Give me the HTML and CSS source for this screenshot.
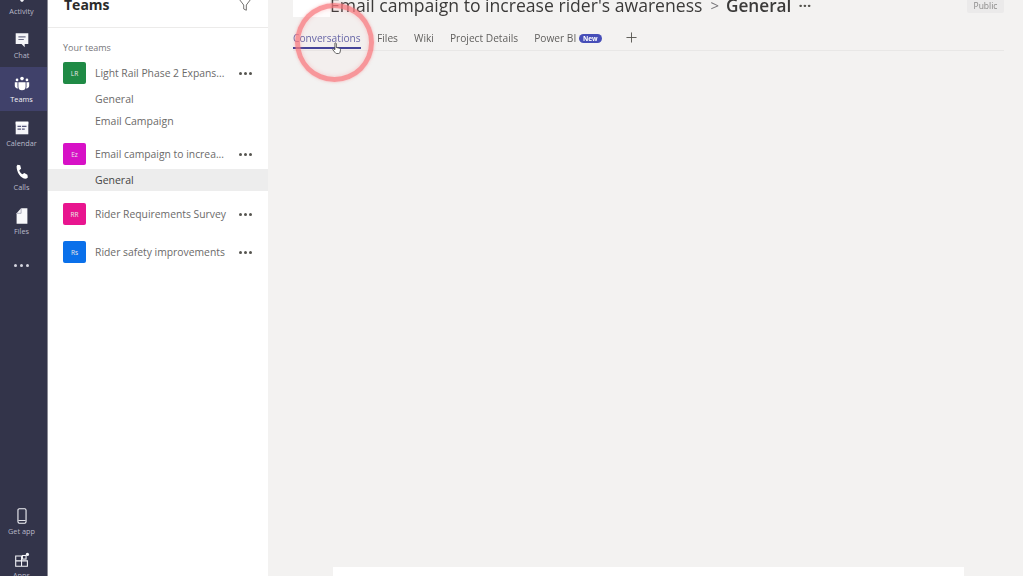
FILE: index.html
```html
<!DOCTYPE html>
<html lang="en">
<head>
<meta charset="UTF-8">
<title>Teams - General</title>
<link rel="stylesheet" href="styles.css">
</head>
<body>

<div class="app">

  <!-- left rail -->
  <nav class="rail">
    <div class="rail-top">
      <a class="rail-item">
        <svg viewBox="0 0 20 20" class="rail-icon"><path d="M10 1c-3 0-5 2-5 5v4l-2 3h14l-2-3V6c0-3-2-5-5-5zM8 14.500h4c0 1-1 2-2 2s-2-1-2-2z" fill="#f4f4f8"/></svg>
        <span>Activity</span>
      </a>
      <a class="rail-item">
        <svg viewBox="0 0 20 20" class="rail-icon"><path d="M3 2.500h14v12h-4v3.500l-3.500-3.500H3z" fill="#f4f4f8"/><path d="M6 6.500h8M6 9.500h6" stroke="#6b6c85" stroke-width="1.200"/></svg>
        <span>Chat</span>
      </a>
      <a class="rail-item active">
        <svg viewBox="0 0 20 20" class="rail-icon"><circle cx="10" cy="4" r="2" fill="#fff"/><circle cx="4.500" cy="5.500" r="1.500" fill="#fff"/><circle cx="15.500" cy="5.500" r="1.500" fill="#fff"/><path d="M6 8h8v5a4 4 0 0 1-8 0zM2 8h3v5l.5 2C3 15 2 13.500 2 12zM15 8h3v4c0 1.500-1 3-3.500 3l.5-2z" fill="#fff"/></svg>
        <span>Teams</span>
      </a>
      <a class="rail-item">
        <svg viewBox="0 0 20 20" class="rail-icon"><path d="M3 3h14v14H3z" fill="#f4f4f8"/><path d="M3 3h14v3H3z" fill="#fff"/><path d="M5 7.500h4v1.500H5zM10 7.500h5v1.500h-5zM5 10.500h4V12H5zM10 10.500h3V12h-3z" fill="#55567a"/></svg>
        <span>Calendar</span>
      </a>
      <a class="rail-item">
        <svg viewBox="0 0 20 20" class="rail-icon"><path d="M5 2l3 .5 1 4-2 1.500c.5 2 1.500 3.500 3.500 4.500l2-1.500 3.500 2 .5 3-2 1.500C8 17 4 10 4 3.500z" fill="#fff"/></svg>
        <span>Calls</span>
      </a>
      <a class="rail-item">
        <svg viewBox="0 0 20 20" class="rail-icon"><path d="M9 1.500h7v17H4V7z" fill="#f8f8fb"/><path d="M9 1.500V7H4" fill="none" stroke="#6b6c85" stroke-width=".6"/></svg>
        <span>Files</span>
      </a>
      <div class="rail-more"><i></i><i></i><i></i></div>
    </div>
    <div class="rail-bottom">
      <a class="rail-item">
        <svg viewBox="0 0 20 20" class="rail-icon"><rect x="5.500" y="2" width="9" height="16" rx="1.500" fill="none" stroke="#f4f4f8" stroke-width="1.200"/><path d="M6 15h8" stroke="#f4f4f8"/></svg>
        <span>Get app</span>
      </a>
      <a class="rail-item">
        <svg viewBox="0 0 20 20" class="rail-icon"><path d="M3 5.500h6.500V17H3zM9.500 11H16v6H9.500zM3 11h13" fill="none" stroke="#f4f4f8" stroke-width="1.200"/><rect x="10.500" y="5" width="4" height="4" fill="none" stroke="#f4f4f8" stroke-width="1.200"/><circle cx="16" cy="3.800" r="1.800" fill="#f4f4f8"/></svg>
        <span>Apps</span>
      </a>
    </div>
  </nav>

  <!-- teams list -->
  <aside class="panel">
    <header class="panel-head">
      <h1>Teams</h1>
      <svg viewBox="0 0 16 16" class="filter"><path d="M1.500 1.500h13L9.500 8v6l-3-1.500V8z" fill="none" stroke="#6e6d6b" stroke-width="1.100"/></svg>
    </header>
    <div class="panel-label">Your teams</div>

    <div class="team team-first">
      <span class="avatar green">LR</span>
      <span class="team-name">Light Rail Phase 2 Expans...</span>
      <span class="dots"><i></i><i></i><i></i></span>
    </div>
    <div class="channel channel-first">General</div>
    <div class="channel">Email Campaign</div>

    <div class="team team-second">
      <span class="avatar magenta">Ez</span>
      <span class="team-name">Email campaign to increa...</span>
      <span class="dots"><i></i><i></i><i></i></span>
    </div>
    <div class="channel current">General</div>

    <div class="team team-third">
      <span class="avatar pink">RR</span>
      <span class="team-name">Rider Requirements Survey</span>
      <span class="dots"><i></i><i></i><i></i></span>
    </div>
    <div class="team team-fourth">
      <span class="avatar blue">Rs</span>
      <span class="team-name">Rider safety improvements</span>
      <span class="dots"><i></i><i></i><i></i></span>
    </div>
  </aside>

  <!-- channel view -->
  <main class="main">
    <div class="title-row">
      <div class="team-tile"></div>
      <h2>Email campaign to increase rider's awareness</h2>
      <span class="chevron">&gt;</span>
      <strong>General</strong>
      <span class="title-dots">&middot;&middot;&middot;</span>
      <span class="public">Public</span>
    </div>
    <div class="tabs">
      <a class="tab on">Conversations</a>
      <a class="tab">Files</a>
      <a class="tab">Wiki</a>
      <a class="tab">Project Details</a>
      <a class="tab">Power BI <em class="new">New</em></a>
      <svg viewBox="0 0 12 12" class="plus"><path d="M6 .5v11M.5 6h11" stroke="#55544f" stroke-width="1"/></svg>
    </div>
    <div class="spacer"></div>
    <div class="compose"></div>

    <!-- click highlight over the first tab -->
    <div class="ring"></div>
    <svg viewBox="0 0 12 16" class="hand"><path d="M3.500 1.500c.8-.6 1.700 0 1.700.8v4.500l3.500.8c1 .3 1.500.8 1.500 1.800l-.5 3c-.2 1-.8 1.600-1.800 1.600H5.500c-.8 0-1.300-.4-1.700-1L1 9.500c-.4-.8.5-1.600 1.300-1l1.200 1z" fill="#fff" stroke="#444" stroke-width="1"/></svg>
  </main>
</div>

</body>
</html>
```

FILE: styles.css
```css
*{box-sizing:border-box;}
html,body{margin:0;height:100%;overflow:hidden;}
body{font-family:"Open Sans","Noto Sans",sans-serif;background:#f3f2f1;}
.app{display:flex;height:576px;width:1023px;overflow:hidden;filter:blur(.6px);}

/* rail */
.rail{width:48px;flex:none;background:#33344a;display:flex;flex-direction:column;justify-content:space-between;border-right:1px solid #8b8b95;}
.rail-top{margin-top:-21px;}
.rail-bottom{margin-bottom:-11px;}
.rail-item{display:flex;flex-direction:column;align-items:center;justify-content:flex-end;height:44px;padding:0 4px 7px 0;color:#b9b9c9;font-size:7.300px;line-height:9px;}
.rail-item.active{background:#40416a;color:#f4f4f8;}
.rail-icon{width:18px;height:18px;margin-bottom:2px;}
.rail-more{display:flex;justify-content:center;gap:3px;padding:21px 4px 0 0;}
.rail-more i{width:3px;height:3px;border-radius:50%;background:#d6d6e0;}

/* team list */
.panel{width:220px;flex:none;background:#fff;}
.panel-head{height:33px;margin-top:-5px;display:flex;align-items:flex-start;justify-content:space-between;padding:0 16px 0 16px;border-bottom:1px solid #ecebea;}
.panel-head h1{margin:0;font-size:14px;line-height:20px;font-weight:700;color:#2b2b2b;}
.filter{width:14px;height:14px;margin-top:3px;}
.panel-label{font-size:9px;line-height:12px;color:#77767a;padding:14px 0 0 15px;}
.team{display:flex;align-items:center;height:24px;padding-left:15px;}
.team-first{margin-top:7px;}
.team-second{margin-top:10px;}
.team-third{margin-top:11px;}
.team-fourth{margin-top:14px;}
.avatar{width:23px;height:22px;border-radius:2px;flex:none;display:flex;align-items:center;justify-content:center;font-size:6.500px;color:#e8e8e8;}
.green{background:#1f8a45;}
.magenta{background:#d711c6;}
.pink{background:#e8158f;}
.blue{background:#0a70ea;}
.team-name{font-size:10.350px;color:#6b6a69;margin-left:9px;flex:1;white-space:nowrap;}
.dots{display:flex;gap:2px;margin-right:16px;}
.dots i{width:3px;height:3px;border-radius:50%;background:#55544f;}
.channel{height:22px;line-height:22px;padding-left:47px;font-size:10.500px;color:#6b6a69;}
.channel-first{margin-top:3px;}
.channel.current{background:#ededed;color:#444;margin-top:3px;}

/* main */
.main{flex:1;position:relative;display:flex;flex-direction:column;padding-left:25px;padding-right:19px;}
.title-row{display:flex;align-items:center;height:17px;color:#3b3a39;}
.team-tile{width:37px;height:17px;background:#fff;flex:none;}
.title-row h2{margin:-7px 0 0;font-size:17.600px;font-weight:400;white-space:nowrap;line-height:22px;}
.chevron{font-size:15px;color:#77767a;margin:-7px 7px 0 8px;}
.title-row strong{font-size:17.200px;font-weight:600;margin-top:-7px;}
.title-dots{font-size:15px;font-weight:700;margin:-7px 0 0 7px;color:#55544f;}
.public{margin:-16px 0 0 auto;width:37px;height:25px;padding-top:12px;background:#ebeaea;border-radius:2px;text-align:center;font-size:8.500px;line-height:12px;color:#8a8988;}
.tabs{display:flex;align-items:flex-start;height:34px;padding-top:14px;border-bottom:1px solid #e8e7e6;}
.tab{font-size:10.200px;line-height:14px;color:#62615f;margin-right:16px;white-space:nowrap;}
.tab.on{color:#6264a7;width:68px;height:18px;border-bottom:2px solid #3f4299;}
.new{display:inline-block;font-style:normal;font-weight:700;font-size:6.500px;line-height:9px;padding:0 4px;border-radius:5px;background:#464eb8;color:#fff;vertical-align:1px;}
.plus{width:11px;height:11px;margin:1px 0 0 8px;}
.spacer{flex:1;}
.compose{width:631px;height:9px;margin-left:40px;background:#fff;flex:none;}
.ring{position:absolute;left:27px;top:3px;width:79px;height:79px;border-radius:50%;border:5px solid rgba(248,120,125,.75);background:rgba(250,170,170,.03);box-shadow:0 0 3px rgba(248,120,125,.5),inset 0 0 4px rgba(248,120,125,.35);}
.hand{position:absolute;left:64px;top:41px;width:10px;height:15px;}
```
